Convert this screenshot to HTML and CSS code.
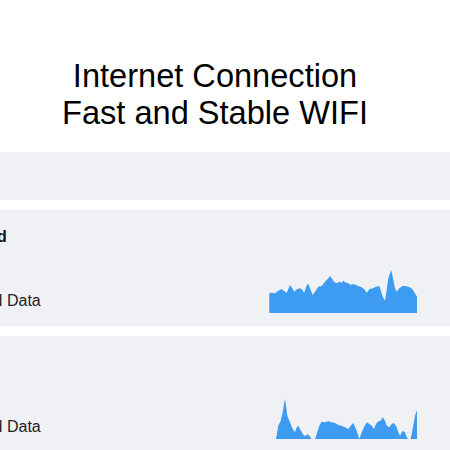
FILE: index.html
```html
<!DOCTYPE html>
<html lang="en">
<head>
    <meta charset="UTF-8">
    <title>Internet Connection</title>
    <link rel="stylesheet" href="styles.css">
</head>
<body>
    <header class="hero">
        <h1>Internet Connection<br>Fast and Stable WIFI</h1>
    </header>
    <section class="summary"></section>
    <section class="card">
        <div class="info">
            <p class="cardTitle">Uploaded</p>
            <p class="cardData">Uploaded Data</p>
        </div>
        <svg class="chart" width="148" height="48" viewBox="0 0 148 48">
            <path d="M0.3 48 L0.3 28.3 L2.7 27.7 L6 28.3 L9.3 25.7 L12.7 24 L16 26.7 L17.7 27.7 L21 20 L23.3 23.3 L25.3 26.7 L27.7 24.3 L31 23.3 L33.7 25 L35 28.3 L37.7 20 L39.3 19 L41 23.3 L43.7 30 L46 26.7 L49.3 21.7 L52.7 21 L56 16.7 L59.3 13.3 L61 11 L62.7 13.3 L65 16.7 L67.7 18.3 L70.3 16.7 L72.7 17.7 L74.3 15.7 L77 17.7 L79.3 18.3 L81.7 20 L84.3 19 L87 20 L89.3 21 L92.7 22.3 L96 25 L97.7 27.7 L100.3 24.3 L103.7 23.3 L107 21.7 L110.3 21 L111.7 25 L113.7 31.7 L116 35.7 L117.7 25 L119.3 13.3 L121 8.3 L122 5 L123 8.3 L124.3 15 L126 23.3 L127.7 26.7 L130.3 23.3 L133.7 21 L137 21 L140.3 22.3 L142.7 23.3 L145 26.7 L147 30 L148 31.7 L148 48 Z"/>
        </svg>
    </section>
    <section class="card">
        <div class="info">
            <p class="cardTitle">Total</p>
            <p class="cardData">Uploaded Data</p>
        </div>
        <svg class="chart" width="148" height="48" viewBox="0 0 148 48">
            <path d="M7 48 L9.3 34.7 L11.7 29.7 L13.7 21.3 L15 13 L16 8 L17 14.7 L18.3 24.7 L21 31.3 L23.7 38 L26 41.3 L27.7 36.3 L29.3 34.7 L31 38 L33.7 43 L36 45.3 L38.3 43 L40.3 44.7 L42.7 48 L46 48 L48.3 41.3 L50.3 34.7 L52.7 30.7 L56 31.3 L59.3 30.3 L62.7 31.3 L66 32 L69.3 34 L72.7 34.7 L76 36.3 L79.3 38 L81.7 34.7 L84.3 32 L87 38 L89.3 44.7 L90.3 48 L92.7 41.3 L95 36.3 L97.7 31.3 L100.3 33 L102.7 34.7 L105 38 L107 33 L109.3 30.3 L111.7 29.7 L113.7 26.3 L116 29.7 L117.7 34.7 L120.3 36.3 L122.7 33 L125 32 L127.7 36.3 L129.3 41.3 L131 44.7 L133.7 39.7 L136 41.3 L137.7 46.3 L139.3 48 L141.7 48 L143.7 38 L146 24.7 L147.7 19.7 L148 19.7 L148 48 Z"/>
        </svg>
    </section>
</body>
</html>
```

FILE: styles.css
```css
*{
    box-sizing: border-box;
}
body{
    margin: 0;
    background: #ffffff;
    font-family: "Liberation Sans", Arial, sans-serif;
    color: #222222;
    overflow: hidden;
}
.hero{
    padding: 57px 20px 21px 0;
}
h1{
    margin: 0;
    font-size: 32.6px;
    font-weight: normal;
    line-height: 37px;
    text-align: center;
    color: #000000;
}
.summary{
    height: 48px;
    background: #f0f1f5;
    margin-bottom: 10px;
}
.card{
    display: flex;
    justify-content: space-between;
    height: 116px;
    padding: 18px 33px 13px 0;
    margin-bottom: 10px;
    background: #f0f1f5;
}
.info{
    margin-left: -66px;
    flex-shrink: 0;
}
.info p{
    margin: 0;
    font-size: 16px;
    line-height: normal;
    white-space: nowrap;
}
.cardTitle{
    font-weight: bold;
    color: #111111;
}
.info .cardData{
    margin-top: 46px;
}
.chart{
    align-self: flex-end;
    display: block;
}
.chart path{
    fill: #3d9cf2;
}
```
